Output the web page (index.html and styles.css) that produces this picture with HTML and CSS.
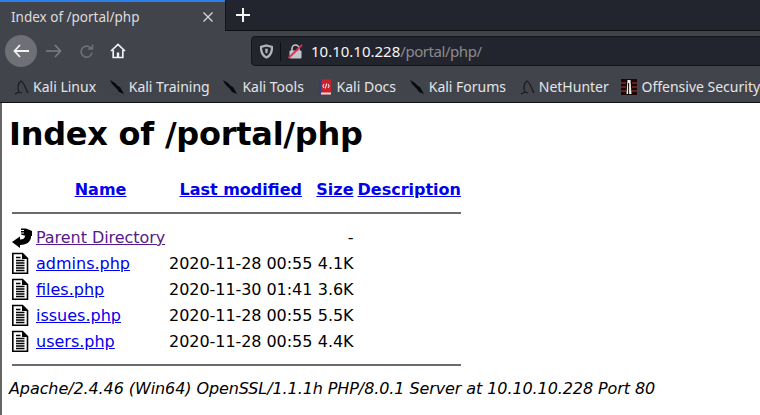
FILE: index.html
```html
<!DOCTYPE html>
<html>
<head>
    <title>Index of /portal/php</title>
    <link rel="stylesheet" href="styles.css">
</head>
<body>
    <div class="browser">
        <div class="tabbar">
            <div class="tab">
                <span class="tab-title">Index of /portal/php</span>
                <svg class="tab-close" width="10" height="10" viewBox="0 0 10 10"><path d="M0.5 0.5L9.5 9.5M9.5 0.5L0.5 9.5" stroke="#d4d4d7" stroke-width="1.4"/></svg>
            </div>
            <div class="newtab">
                <svg width="14" height="14" viewBox="0 0 14 14"><path d="M7 0V14M0 7H14" stroke="#f5f5f6" stroke-width="2"/></svg>
            </div>
        </div>
        <div class="navbar">
            <div class="nav-back">
                <svg width="16" height="14" viewBox="0 0 16 14"><path d="M7 1L1.5 7L7 13M1.5 7H16" fill="none" stroke="#f2f2f3" stroke-width="1.8"/></svg>
            </div>
            <svg class="nav-icon nav-forward" width="16" height="14" viewBox="0 0 16 14"><path d="M9 1L14.5 7L9 13M14.5 7H0" fill="none" stroke="#7d7e84" stroke-width="1.6"/></svg>
            <svg class="nav-icon" width="15" height="15" viewBox="0 0 15 15"><path d="M13 8.5A5.5 5.5 0 1 1 10.5 3L13 4.5M13.5 0.5V5H9" fill="none" stroke="#6e6f75" stroke-width="1.6"/></svg>
            <svg class="nav-icon nav-home" width="16" height="16" viewBox="0 0 16 16"><path d="M1 8L8 1.5L15 8M3.2 7V14.5H12.8V7" fill="none" stroke="#f2f2f3" stroke-width="1.7"/><rect x="6.8" y="9.5" width="2.4" height="5" fill="#f2f2f3"/></svg>
            <div class="urlbar">
                <svg class="url-shield" width="13" height="15" viewBox="0 0 14 15"><path d="M7 1L13 2.5C13 8 11.5 12 7 14C2.5 12 1 8 1 2.5Z" fill="none" stroke="#b4b5b9" stroke-width="2.4"/><path d="M5.5 4.5H8.5L8 9.5H6Z" fill="#b4b5b9"/></svg>
                <span class="url-sep"></span>
                <svg class="url-lock" width="15" height="15" viewBox="0 0 15 15"><rect x="1.5" y="6.5" width="12" height="8" rx="1" fill="#c4c5c9"/><path d="M4 7V4.5a3.5 3.5 0 0 1 7 0V7" fill="none" stroke="#c4c5c9" stroke-width="1.6"/><path d="M0.5 14L14 1" stroke="#f0264f" stroke-width="1.8"/></svg>
                <span class="url-text">10.10.10.228<span class="url-path">/portal/php/</span></span>
            </div>
        </div>
        <div class="bookmarks">
            <div class="bookmark">
                <svg width="16" height="16" viewBox="0 0 16 16"><path d="M2 15L6 13C4 9 5 4 8 2C11 3 12 9 15 14M6 13L9 14" fill="none" stroke="#1a1a1a" stroke-width="1.2"/></svg>
                <span>Kali Linux</span>
            </div>
            <div class="bookmark">
                <svg width="16" height="16" viewBox="0 0 16 16"><path d="M1 1L6 4L9 7L11 8L15 15L10 13L8 10L3 5Z" fill="#0a0a0a"/></svg>
                <span>Kali Training</span>
            </div>
            <div class="bookmark">
                <svg width="16" height="16" viewBox="0 0 16 16"><path d="M1 1L6 4L9 7L11 8L15 15L10 13L8 10L3 5Z" fill="#0a0a0a"/></svg>
                <span>Kali Tools</span>
            </div>
            <div class="bookmark">
                <svg width="16" height="16" viewBox="0 0 16 16"><rect x="2" y="0.5" width="12" height="15" fill="#c8232c"/><rect x="2" y="0.5" width="2.5" height="15" fill="#27407f"/><rect x="4" y="13.5" width="10" height="2" fill="#dcdcdc"/><path d="M7 5L5.8 7L7 9M11 5L12.2 7L11 9M9.6 4.5L8.4 9.5" fill="none" stroke="#fff" stroke-width="1"/></svg>
                <span>Kali Docs</span>
            </div>
            <div class="bookmark">
                <svg width="16" height="16" viewBox="0 0 16 16"><path d="M1 1L6 4L9 7L11 8L15 15L10 13L8 10L3 5Z" fill="#0a0a0a"/></svg>
                <span>Kali Forums</span>
            </div>
            <div class="bookmark">
                <svg width="16" height="16" viewBox="0 0 16 16"><path d="M2 15L6 13C4 9 5 4 8 2C11 3 12 9 15 14M6 13L9 14" fill="none" stroke="#1a1a1a" stroke-width="1.2"/></svg>
                <span>NetHunter</span>
            </div>
            <div class="bookmark">
                <svg width="16" height="16" viewBox="0 0 16 16"><rect width="16" height="16" fill="#1a0808"/><path d="M0 4H5M11 4H16M0 8H5M11 8H16M0 12H5M11 12H16" stroke="#7a2a2a" stroke-width="1.5"/><path d="M6.5 1H9.5L10.5 15H5.5Z" fill="#eee"/><path d="M7.6 4V15" stroke="#1a0808"/></svg>
                <span>Offensive Security</span>
            </div>
        </div>
    </div>
    <div class="page">
        <h1>Index of /portal/php</h1>
        <table>
            <tr>
                <th class="icon-col"></th>
                <th><a href="#">Name</a></th>
                <th><a href="#">Last modified</a></th>
                <th><a href="#">Size</a></th>
                <th><a href="#">Description</a></th>
            </tr>
            <tr><th colspan="5"><hr></th></tr>
            <tr>
                <td>
                    <svg class="parent-icon" width="20" height="21" viewBox="0 0 20 21"><path d="M0 15L8 9.5V12.5C11 12.5 13 11.5 13 9H19C19.5 14 15 18 8 18V21Z" fill="#000"/><path d="M9 1.5H14L20 4V9H14L9 7.5Z" fill="#000"/><path d="M8 3.5H12M8 6H12" stroke="#fff" stroke-width="1"/></svg>
                </td>
                <td><a class="visited" href="#">Parent Directory</a></td>
                <td>&nbsp;</td>
                <td class="right">-</td>
                <td>&nbsp;</td>
            </tr>
            <tr>
                <td><svg class="doc" width="20" height="22"><use href="#doc"/></svg></td>
                <td><a href="#">admins.php</a></td>
                <td class="right">2020-11-28 00:55</td>
                <td class="right">4.1K</td>
                <td>&nbsp;</td>
            </tr>
            <tr>
                <td><svg class="doc" width="20" height="22"><use href="#doc"/></svg></td>
                <td><a href="#">files.php</a></td>
                <td class="right">2020-11-30 01:41</td>
                <td class="right">3.6K</td>
                <td>&nbsp;</td>
            </tr>
            <tr>
                <td><svg class="doc" width="20" height="22"><use href="#doc"/></svg></td>
                <td><a href="#">issues.php</a></td>
                <td class="right">2020-11-28 00:55</td>
                <td class="right">5.5K</td>
                <td>&nbsp;</td>
            </tr>
            <tr>
                <td><svg class="doc" width="20" height="22"><use href="#doc"/></svg></td>
                <td><a href="#">users.php</a></td>
                <td class="right">2020-11-28 00:55</td>
                <td class="right">4.4K</td>
                <td>&nbsp;</td>
            </tr>
            <tr><th colspan="5"><hr class="hr-end"></th></tr>
        </table>
        <address>Apache/2.4.46 (Win64) OpenSSL/1.1.1h PHP/8.0.1 Server at 10.10.10.228 Port 80</address>
    </div>
    <svg width="0" height="0" class="defs">
        <symbol id="doc" viewBox="0 0 20 22">
            <path d="M0.8 1.5H10.5L15.5 6.5V21.2H0.8Z" fill="#fff" stroke="#000" stroke-width="1.6"/>
            <path d="M10 1.5V7H15.5Z" fill="#000"/>
            <path d="M4 5.5H8.5M4 8.5H12.5M4 11H12.5M4 13.5H12.5M4 16H12.5M4 18.5H12.5" stroke="#000" stroke-width="1.5"/>
        </symbol>
    </svg>
</body>
</html>
```

FILE: styles.css
```css
html, body {
    margin: 0;
    padding: 0;
    background: white;
    overflow: hidden;
}
body {
    height: 415px;
}
.browser {
    font-family: "Noto Sans", sans-serif;
    font-size: 14px;
    color: #e4e5e7;
}
.tabbar {
    display: flex;
    height: 31px;
    background: #23252e;
}
.tab {
    width: 225px;
    display: flex;
    align-items: center;
    justify-content: space-between;
    padding: 0 12px 0 11px;
    box-sizing: border-box;
    background: #42444c;
    border-top: 2px solid #2b7fe8;
}
.tab-title {
    font-size: 13.5px;
    color: #dcdcde;
}
.newtab {
    flex: 1;
    display: flex;
    align-items: center;
    padding-left: 10px;
    border-left: 1px solid #141519;
    border-bottom: 1px solid #0e0f12;
}
.navbar {
    display: flex;
    align-items: center;
    height: 40px;
    background: #42444c;
    padding-left: 5px;
    box-sizing: border-box;
}
.nav-back {
    width: 32px;
    height: 32px;
    border-radius: 50%;
    background: #6f7075;
    display: flex;
    align-items: center;
    justify-content: center;
}
.nav-icon {
    margin-left: 17px;
}
.nav-forward {
    margin-left: 9px;
}
.nav-home {
    margin-left: 16px;
}
.urlbar {
    flex: 1;
    display: flex;
    align-items: center;
    height: 30px;
    box-sizing: border-box;
    margin-left: 125px;
    margin-right: -4px;
    padding-left: 8px;
    background: #23252e;
    border: 1px solid #141519;
    border-radius: 4px;
}
.url-shield {
    flex: none;
}
.url-sep {
    width: 1px;
    height: 19px;
    margin: 0 7px;
    background: #0e0f12;
}
.url-text {
    margin-left: 8px;
    font-size: 15px;
    color: #f5f5f6;
}
.url-path {
    color: #8a8b90;
    letter-spacing: -0.45px;
}
.bookmarks {
    display: flex;
    height: 32px;
    align-items: center;
    padding-left: 13px;
    gap: 12.7px;
    white-space: nowrap;
    background: #42444c;
    border-bottom: 1px solid #0e0f12;
    box-sizing: border-box;
}
.bookmark {
    display: flex;
    align-items: center;
    gap: 4px;
}
.page {
    font-family: "DejaVu Sans", sans-serif;
    font-size: 16px;
    color: black;
    height: 312px;
    box-sizing: border-box;
    padding: 8px 7px;
    border-left: 2px solid #666;
}
h1 {
    margin: 4px 0 24px 0;
    font-size: 32px;
    letter-spacing: -0.25px;
}
table {
    border-spacing: 2px;
}
th, td {
    padding: 1px;
}
.icon-col {
    width: 20px;
}
.right {
    text-align: right;
    letter-spacing: -0.06px;
}
td svg {
    display: block;
}
.parent-icon {
    overflow: visible;
}
hr {
    margin: 9px 0;
    height: 2px;
    border: none;
    background: #6b6b6b;
}
.hr-end {
    margin: 8px 0 10px;
}
a {
    color: #0000ee;
}
a.visited {
    color: #551a8b;
    letter-spacing: -0.06px;
}
address {
    margin-top: 0;
    letter-spacing: -0.09px;
}
.defs {
    position: absolute;
}
```
